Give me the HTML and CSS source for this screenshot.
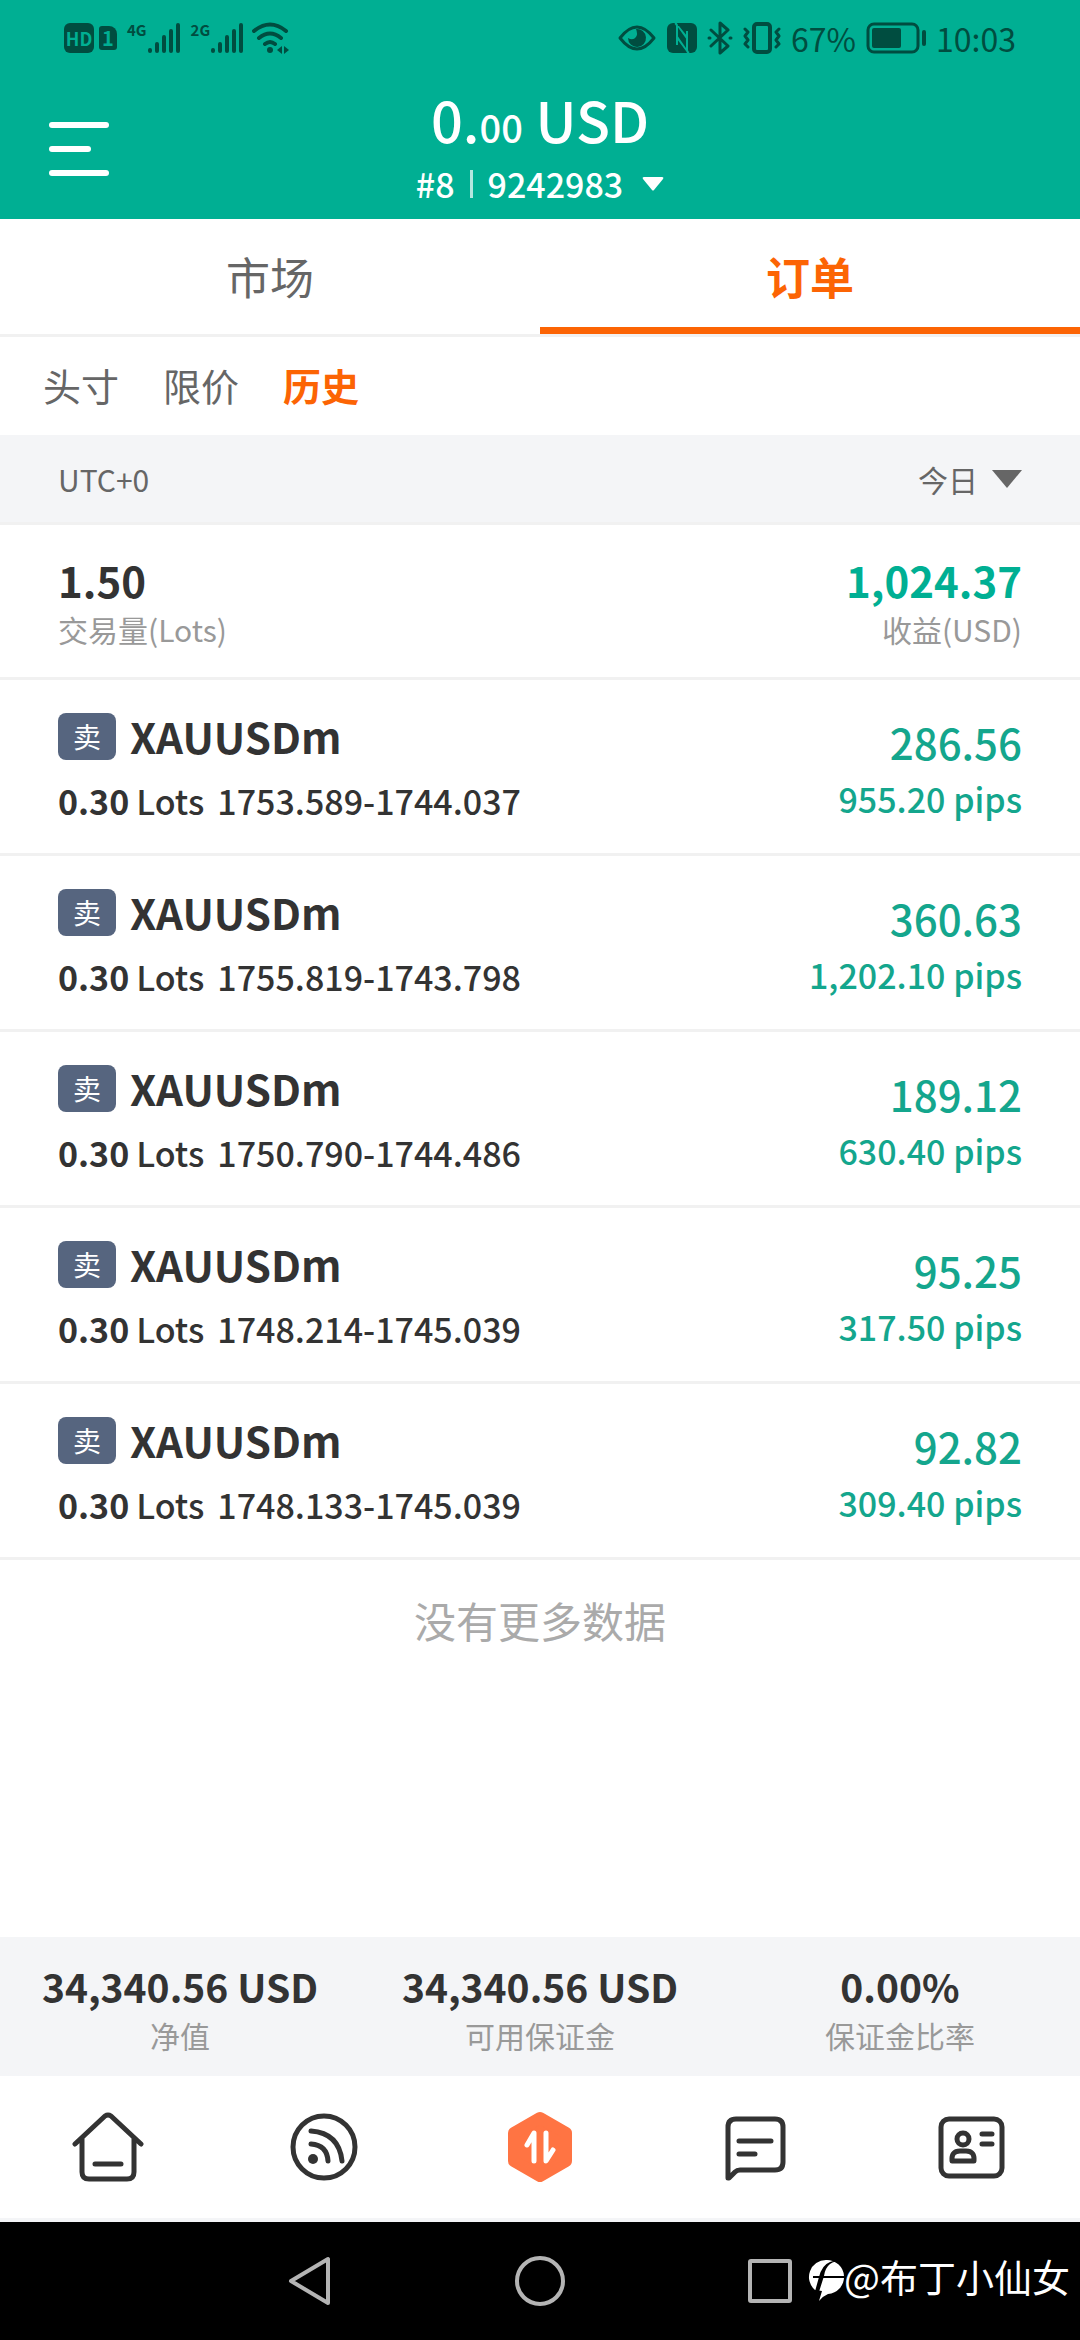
FILE: index.html
```html
<!DOCTYPE html>
<html lang="zh-CN">
<head>
    <meta charset="UTF-8">
    <meta name="viewport" content="width=device-width, initial-scale=1.0">
    <title>订单 - 历史</title>
    <link rel="stylesheet" href="styles.css">
</head>
<body>
    <header class="header">
        <div class="status-bar">
            <div class="status-left">
                <span class="hd">HD</span>
                <span class="sim">1</span>
                <span class="signal">
                    <span class="network">4G</span>
                    <svg width="34" height="32" viewBox="0 0 34 32" fill="none" stroke="currentColor" stroke-width="4" stroke-linecap="round"><path d="M3 28v1M10 22v7M17 15v14M24 9v20M31 3v26"/></svg>
                </span>
                <span class="signal">
                    <span class="network">2G</span>
                    <svg width="34" height="32" viewBox="0 0 34 32" fill="none" stroke="currentColor" stroke-width="4" stroke-linecap="round"><path d="M3 28v1M10 22v7M17 15v14M24 9v20M31 3v26"/></svg>
                </span>
                <svg width="38" height="32" viewBox="0 0 38 32" fill="none" stroke="currentColor" stroke-width="4" stroke-linecap="round">
                    <path d="M2 9Q18-4 34 9M7 16Q18 7 29 16M13 22Q18 18 23 22"/>
                    <circle cx="18" cy="28" r="3" fill="currentColor" stroke="none"/>
                    <path d="M30 24v8l-5-4zM32 24v8l5-4z" fill="currentColor" stroke="none"/>
                </svg>
            </div>
            <div class="status-right">
                <svg width="40" height="28" viewBox="0 0 40 28">
                    <path d="M3 14Q20-8 37 14Q20 36 3 14z" fill="none" stroke="currentColor" stroke-width="3" stroke-linejoin="round"/>
                    <path d="M19 5a9 9 0 1 1-8 9q5 3 8-1 2-3 0-8z" fill="currentColor"/>
                </svg>
                <svg width="30" height="30" viewBox="0 0 30 30">
                    <rect width="30" height="30" rx="6" fill="currentColor"/>
                    <path d="M8 0q2 1 2 3v19M22 30q-2-1-2-3V8" fill="none" stroke="#00af93" stroke-width="2"/>
                    <path d="M10 12l11 16h-2L10 16zM20 17L10 3h2l8 10z" fill="#00af93"/>
                </svg>
                <svg width="26" height="34" viewBox="0 0 26 34" fill="none" stroke="currentColor" stroke-width="3" stroke-linejoin="round" stroke-linecap="round">
                    <path d="M4 9l17 16-8 7V2l8 7L4 25M2 17h1M23 17h1"/>
                </svg>
                <svg width="38" height="32" viewBox="0 0 38 32" fill="none" stroke="currentColor" stroke-width="3" stroke-linecap="round" stroke-linejoin="round">
                    <rect x="11" y="2" width="16" height="28" rx="3" stroke-width="4"/>
                    <path d="M2 7l3 3-3 4 3 4-3 4 3 3M36 7l-3 3 3 4-3 4 3 4-3 3"/>
                </svg>
                <span class="status-text">67%</span>
                <svg width="60" height="32" viewBox="0 0 60 32">
                    <rect x="2" y="2" width="50" height="28" rx="6" fill="none" stroke="currentColor" stroke-width="3"/>
                    <rect x="6" y="6" width="29" height="20" rx="2" fill="currentColor"/>
                    <rect x="56" y="8" width="4" height="16" rx="2" fill="currentColor"/>
                </svg>
                <span class="status-text clock">10:03</span>
            </div>
        </div>
        <div class="account-bar">
            <button class="menu-button" aria-label="菜单">
                <span></span>
                <span></span>
                <span></span>
            </button>
            <div class="account">
                <h1>0.<small>00</small> USD</h1>
                <button class="account-button">
                    #8 <span class="divider"></span> 9242983
                    <svg width="22" height="14" viewBox="0 0 22 14"><path d="M2 0h18q2 0 1 2l-9 11q-1 1-2 0L1 2Q0 0 2 0z" fill="#fff"/></svg>
                </button>
            </div>
        </div>
    </header>

    <nav class="tabs">
        <button>市场</button>
        <button class="active">订单</button>
    </nav>

    <nav class="sub-tabs">
        <button>头寸</button>
        <button>限价</button>
        <button class="active">历史</button>
    </nav>

    <div class="filter">
        <span>UTC+0</span>
        <label class="period">
            <select aria-label="日期">
                <option>今日</option>
            </select>
            <svg width="30" height="18" viewBox="0 0 30 18"><path d="M0 0h30L15 18z" fill="#666"/></svg>
        </label>
    </div>

    <main class="history">
        <div class="summary">
            <div>
                <strong>1.50</strong>
                <span>交易量(Lots)</span>
            </div>
            <div class="profit">
                <strong>1,024.37</strong>
                <span>收益(USD)</span>
            </div>
        </div>

        <ul class="orders">
            <li>
                <div class="order-info">
                    <h2><span class="badge">卖</span>XAUUSDm</h2>
                    <p><b>0.30</b><span>Lots</span><span class="prices">1753.589-1744.037</span></p>
                </div>
                <div class="order-result">
                    <span class="amount">286.56</span>
                    <span class="pips">955.20 pips</span>
                </div>
            </li>
            <li>
                <div class="order-info">
                    <h2><span class="badge">卖</span>XAUUSDm</h2>
                    <p><b>0.30</b><span>Lots</span><span class="prices">1755.819-1743.798</span></p>
                </div>
                <div class="order-result">
                    <span class="amount">360.63</span>
                    <span class="pips">1,202.10 pips</span>
                </div>
            </li>
            <li>
                <div class="order-info">
                    <h2><span class="badge">卖</span>XAUUSDm</h2>
                    <p><b>0.30</b><span>Lots</span><span class="prices">1750.790-1744.486</span></p>
                </div>
                <div class="order-result">
                    <span class="amount">189.12</span>
                    <span class="pips">630.40 pips</span>
                </div>
            </li>
            <li>
                <div class="order-info">
                    <h2><span class="badge">卖</span>XAUUSDm</h2>
                    <p><b>0.30</b><span>Lots</span><span class="prices">1748.214-1745.039</span></p>
                </div>
                <div class="order-result">
                    <span class="amount">95.25</span>
                    <span class="pips">317.50 pips</span>
                </div>
            </li>
            <li>
                <div class="order-info">
                    <h2><span class="badge">卖</span>XAUUSDm</h2>
                    <p><b>0.30</b><span>Lots</span><span class="prices">1748.133-1745.039</span></p>
                </div>
                <div class="order-result">
                    <span class="amount">92.82</span>
                    <span class="pips">309.40 pips</span>
                </div>
            </li>
        </ul>

        <p class="no-more">没有更多数据</p>
    </main>

    <div class="balances">
        <div>
            <strong>34,340.56 USD</strong>
            <span>净值</span>
        </div>
        <div>
            <strong>34,340.56 USD</strong>
            <span>可用保证金</span>
        </div>
        <div>
            <strong>0.00%</strong>
            <span>保证金比率</span>
        </div>
    </div>

    <nav class="bottom-nav">
        <a href="#home" aria-label="首页">
            <svg viewBox="0 0 72 72">
                <path d="M3 33L33 5q3-2 6 0L69 33M10 27v34q0 7 7 7h38q7 0 7-7V27M23 53h26"/>
            </svg>
        </a>
        <a href="#signals" aria-label="信号">
            <svg viewBox="0 0 72 72">
                <circle cx="36" cy="36" r="31"/>
                <path d="M23 33q16 1 17 17M23 20q28 2 31 30"/>
                <circle class="solid" cx="25" cy="48" r="5"/>
            </svg>
        </a>
        <a class="trade" href="#trade" aria-label="交易">
            <svg viewBox="0 0 72 72">
                <path class="hexagon" d="M36 7l26 15v28L36 65 10 50V22z"/>
                <path class="arrows" d="M30 50V22l-7 12M42 22v28l7-11"/>
            </svg>
        </a>
        <a href="#messages" aria-label="消息">
            <svg viewBox="0 0 72 72">
                <path d="M8 67V16q0-8 8-8h39q8 0 8 8v35q0 8-8 8H20q-3 0-5 2l-6 6zM19 30h32M19 43h16"/>
            </svg>
        </a>
        <a href="#profile" aria-label="我的">
            <svg viewBox="0 0 72 72">
                <rect x="5" y="8" width="61" height="57" rx="8"/>
                <circle cx="27" cy="28" r="6"/>
                <path d="M16 50q-1-10 8-10h6q9 0 8 10zM46 23h10M46 33h10"/>
            </svg>
        </a>
    </nav>

    <footer class="system-nav">
        <button aria-label="返回"><svg width="48" height="52" viewBox="0 0 48 52"><path d="M42 4v44L5 26z"/></svg></button>
        <button aria-label="主屏幕"><svg width="52" height="52" viewBox="0 0 52 52"><circle cx="26" cy="26" r="23"/></svg></button>
        <button aria-label="最近任务"><svg width="48" height="52" viewBox="0 0 48 52"><rect x="4" y="6" width="40" height="40" rx="1"/></svg></button>
        <div class="watermark">
            <svg width="36" height="44" viewBox="0 0 36 44">
                <path d="M18 1a17 17 0 0 1 2 34q-5 2-9 7l3-10-7-1A17 17 0 0 1 18 1z" fill="#fff"/>
                <path d="M30 3Q26 2 22 5 17 9 16 17L10 36H6l5-18Q14 6 22 3 27 1 30 3zM5 17h31v2H5z" fill="#000"/>
            </svg>
            <span>@布丁小仙女</span>
        </div>
    </footer>
</body>
</html>
```

FILE: styles.css
```css
* {
    box-sizing: border-box;
}

body {
    display: flex;
    flex-direction: column;
    min-height: 100vh;
    margin: 0;
    font-family: "Noto Sans CJK SC", "Noto Sans", sans-serif;
    background: #fff;
    color: #333;
}

h1, h2, p, ul {
    margin: 0;
    padding: 0;
}

button, select {
    padding: 0;
    border: none;
    background: none;
    font-family: inherit;
    color: inherit;
    cursor: pointer;
}

svg {
    display: block;
}

/* Header */
.header {
    background: #00af93;
    color: #fff;
    padding-bottom: 9px;
}

.status-bar {
    display: flex;
    justify-content: space-between;
    align-items: center;
    height: 76px;
    padding: 0 64px;
    color: #004d40;
}

.status-left, .status-right {
    display: flex;
    align-items: center;
}

.status-right {
    gap: 10px;
}

.hd, .sim {
    border-radius: 6px;
    background: #004d40;
    color: #00af93;
    font-weight: bold;
    text-align: center;
}

.hd {
    width: 30px;
    height: 30px;
    font-size: 18px;
    line-height: 30px;
}

.sim {
    width: 18px;
    height: 24px;
    margin-left: 5px;
    border-radius: 3px 8px 3px 3px;
    font-size: 20px;
    line-height: 24px;
}

.signal {
    display: flex;
    margin-left: 10px;
}

.network {
    font-size: 15px;
    line-height: 16px;
    font-weight: bold;
}

.signal + svg {
    margin-left: 8px;
}

.status-text {
    font-size: 32px;
    line-height: 36px;
}

.account-bar {
    display: grid;
    grid-template-columns: 1fr auto 1fr;
    align-items: center;
    height: 134px;
    padding: 8px 49px 0;
}

.menu-button {
    display: flex;
    flex-direction: column;
    gap: 18px;
    width: 60px;
}

.menu-button span {
    width: 100%;
    height: 6px;
    border-radius: 3px;
    background: #fff;
}

.menu-button span:nth-child(2) {
    width: 70%;
}

.account {
    display: flex;
    flex-direction: column;
    align-items: center;
    padding-bottom: 8px;
}

.account h1 {
    font-size: 56px;
    line-height: 70px;
    font-weight: 500;
}

.account small {
    font-size: 38px;
}

.account-button {
    display: flex;
    align-items: center;
    gap: 15px;
    font-size: 34px;
    line-height: 44px;
    font-weight: 500;
}

.account-button svg {
    margin-left: 4px;
}

.divider {
    width: 3px;
    height: 28px;
    background: #b3e7df;
}

/* Tabs */
.tabs {
    display: grid;
    grid-template-columns: 1fr 1fr;
    border-bottom: 3px solid #f1f1f1;
}

.tabs button {
    height: 115px;
    border-top: 6px solid transparent;
    border-bottom: 7px solid transparent;
    font-size: 44px;
    color: #666;
}

.tabs .active {
    border-bottom-color: #fc6404;
}

.tabs .active, .sub-tabs .active {
    color: #fc6404;
    font-weight: bold;
}

.sub-tabs {
    display: flex;
    gap: 44px;
    padding: 20px 43px 22px;
}

.sub-tabs button {
    font-size: 38px;
    line-height: 56px;
    color: #666;
}

.filter {
    display: flex;
    justify-content: space-between;
    align-items: center;
    height: 90px;
    padding: 0 58px;
    border-bottom: 3px solid #f1f1f1;
    background: #f4f5f7;
    font-size: 30px;
    color: #666;
}

.period {
    display: flex;
    align-items: center;
    gap: 14px;
}

.period select {
    appearance: none;
    font-size: 30px;
}

/* History */
.history {
    flex: 1;
}

.summary, .orders li {
    display: flex;
    justify-content: space-between;
    border-bottom: 3px solid #f1f1f1;
}

.summary {
    padding: 28px 58px 26px;
}

.summary div {
    display: flex;
    flex-direction: column;
}

.summary strong {
    font-size: 42px;
    line-height: 54px;
}

.summary span {
    font-size: 30px;
    line-height: 44px;
    color: #999;
}

.profit {
    text-align: right;
}

.profit strong {
    color: #00af93;
}

.orders {
    list-style: none;
}

.orders li {
    padding: 30px 58px 29px;
}

.order-info h2 {
    display: flex;
    align-items: center;
    gap: 14px;
    font-size: 42px;
    line-height: 52px;
    font-weight: bold;
}

.badge {
    width: 58px;
    height: 47px;
    border-radius: 8px;
    background: #56657f;
    color: #fff;
    font-size: 28px;
    line-height: 46px;
    font-weight: normal;
    text-align: center;
}

.order-info p {
    display: flex;
    gap: 7px;
    margin-top: 16px;
    font-size: 34px;
    line-height: 46px;
    font-weight: 500;
}

.prices {
    margin-left: 6px;
}

.order-result {
    display: flex;
    flex-direction: column;
    padding-top: 6px;
    text-align: right;
    color: #14a68d;
}

.amount {
    font-size: 42px;
    line-height: 52px;
    font-weight: 500;
}

.pips {
    margin-top: 8px;
    font-size: 34px;
    line-height: 46px;
    font-weight: 500;
}

.no-more {
    padding: 30px 0;
    font-size: 42px;
    line-height: 60px;
    text-align: center;
    color: #aaa;
}

/* Balances */
.balances {
    display: grid;
    grid-template-columns: repeat(3, 1fr);
    padding: 22px 0 19px;
    background: #f4f5f7;
}

.balances div {
    display: flex;
    flex-direction: column;
    align-items: center;
}

.balances strong {
    font-size: 39px;
    line-height: 54px;
}

.balances span {
    font-size: 30px;
    line-height: 44px;
    color: #999;
}

/* Bottom navigation */
.bottom-nav {
    display: grid;
    grid-template-columns: repeat(5, 1fr);
    height: 146px;
    border-bottom: 4px solid #f4f5f7;
}

.bottom-nav a {
    display: flex;
    justify-content: center;
    align-items: center;
}

.bottom-nav svg {
    width: 72px;
    height: 72px;
    fill: none;
    stroke: #333;
    stroke-width: 5;
    stroke-linecap: round;
    stroke-linejoin: round;
}

.bottom-nav .solid {
    fill: #333;
    stroke: none;
}

.bottom-nav .hexagon {
    fill: #ff7443;
    stroke: #ff7443;
    stroke-width: 12;
}

.bottom-nav .arrows {
    stroke: #fff;
}

.system-nav {
    position: relative;
    display: flex;
    justify-content: center;
    align-items: center;
    gap: 180px;
    height: 118px;
    background: #000;
}

.system-nav button svg {
    fill: none;
    stroke: #b4b4b4;
    stroke-width: 4;
    stroke-linejoin: round;
}

.watermark {
    position: absolute;
    right: 10px;
    top: 24px;
    display: flex;
    align-items: center;
    color: #fff;
    font-size: 38px;
    line-height: 60px;
}

.watermark svg {
    margin-top: 10px;
}
```
